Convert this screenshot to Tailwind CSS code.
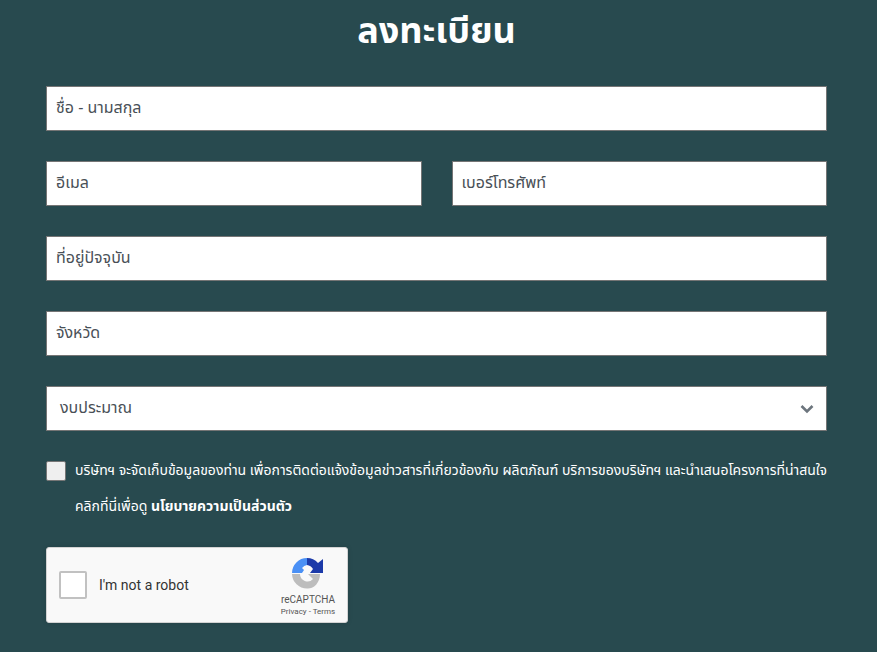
<!DOCTYPE html>
<html lang="th">
<head>
<meta charset="utf-8">
<script src="https://cdn.jsdelivr.net/npm/@tailwindcss/browser@4"></script>
</head>
<body class="m-0 h-[652px] w-[877px] overflow-hidden bg-[#284a4f] font-['Noto_Sans','Noto_Sans_Thai',sans-serif]">
<main class="flex flex-col px-[46px] pr-[50px]">
  <h1 class="h-[86px] pt-[7px] text-center text-[36px] leading-[46px] font-bold text-white">ลงทะเบียน</h1>
  <form class="flex flex-col gap-[30px]">
    <div class="flex h-[45px] items-center border border-[#757575] bg-white px-[9px] pb-[3px] text-[16px] text-[#495057]">ชื่อ - นามสกุล</div>
    <div class="flex gap-[30px]">
      <div class="flex h-[45px] flex-1 items-center border border-[#757575] bg-white px-[9px] pb-[3px] text-[16px] text-[#495057]">อีเมล</div>
      <div class="flex h-[45px] flex-1 items-center border border-[#757575] bg-white px-[9px] pb-[3px] text-[16px] text-[#495057]">เบอร์โทรศัพท์</div>
    </div>
    <div class="flex h-[45px] items-center border border-[#757575] bg-white px-[9px] pb-[3px] text-[16px] text-[#495057]">ที่อยู่ปัจจุบัน</div>
    <div class="flex h-[45px] items-center border border-[#757575] bg-white px-[9px] pb-[3px] text-[16px] text-[#495057]">จังหวัด</div>
    <div class="flex h-[45px] items-center justify-between border border-[#757575] bg-white pr-[12px] pl-[13px] text-[16px] text-[#495057]">
      <span class="pb-[3px]">งบประมาณ</span>
      <svg width="14" height="10" viewBox="0 0 14 10" fill="none" stroke="#6c757d" stroke-width="2.6"><path d="M1.5 2 L7 7.5 L12.5 2"/></svg>
    </div>
  </form>
  <div class="mt-[21px] flex gap-[9px]">
    <span class="mt-[9px] h-[20px] w-[20px] shrink-0 rounded-[2px] border border-[#767676] bg-[#efefef]"></span>
    <p class="text-[14px] leading-[36px] whitespace-nowrap text-white">บริษัทฯ จะจัดเก็บข้อมูลของท่าน เพื่อการติดต่อแจ้งข้อมูลข่าวสารที่เกี่ยวข้องกับ ผลิตภัณฑ์ บริการของบริษัทฯ และนำเสนอโครงการที่น่าสนใจ<br>คลิกที่นี่เพื่อดู <b class="font-bold">นโยบายความเป็นส่วนตัว</b></p>
  </div>
  <div class="mt-[23px] flex h-[76px] w-[302px] items-center rounded-[3px] border border-[#d3d3d3] bg-[#f9f9f9] font-['Roboto',sans-serif] shadow-[0_0_4px_1px_rgba(0,0,0,0.08)]">
    <span class="ml-[12px] h-[28px] w-[28px] shrink-0 rounded-[2px] border-2 border-[#c1c1c1] bg-white"></span>
    <span class="ml-[12px] flex-1 text-[14px] text-[#333]">I'm not a robot</span>
    <div class="mr-[10px] flex w-[58px] flex-col items-center pt-[5px]">
      <svg width="32" height="31" viewBox="0 0 32 31">
        <path d="M15 0 A15 15 0 0 0 0 15 L10 15 L12 12 L10 10 A8 8 0 0 1 15 7 Z" fill="#4a90f5"/>
        <path d="M15 0 A15 15 0 0 1 26 5 L31 1 L31 15 L18 15 L21 11 A8 8 0 0 0 15 7 Z" fill="#1c3aa9"/>
        <path d="M0 16 L8 16 A7.5 7.5 0 0 0 21 21 L16 16 L28 16 A12 14.5 0 0 1 15 30.5 A15 15 0 0 1 0 16 Z" fill="#bdbdbd"/>
      </svg>
      <span class="mt-[4px] text-[10px] leading-[13px] text-[#555]">reCAPTCHA</span>
      <span class="text-[8px] leading-[12px] whitespace-nowrap text-[#555]">Privacy - Terms</span>
    </div>
  </div>
</main>
</body>
</html>
